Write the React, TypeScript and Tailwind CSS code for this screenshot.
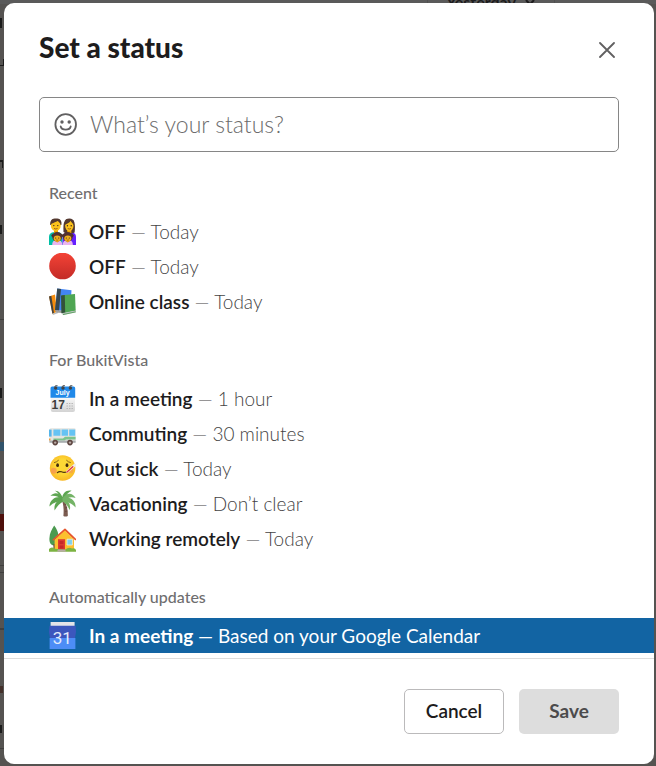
import { useState } from "react";
import type { ReactNode } from "react";

/* ---------- Emoji artwork ---------- */

function Emoji({ children }: { children: ReactNode }) {
  return (
    <svg viewBox="0 0 27 27" className="size-[27px] shrink-0" aria-hidden="true">
      {children}
    </svg>
  );
}

function Child({ x }: { x: number }) {
  return (
    <g transform={`translate(${x} 0)`}>
      <path d="M-5 27 C-5 23 -3 22 0 22 C3 22 5 23 5 27 Z" fill="#e9b5ee" />
      <circle cx="-4.2" cy="17.6" r="1.6" fill="#4b2f2b" />
      <circle cx="4.2" cy="17.6" r="1.6" fill="#4b2f2b" />
      <circle cx="0" cy="18.8" r="4.9" fill="#543330" />
      <ellipse cx="0" cy="20.4" rx="3.5" ry="3" fill="#efb01b" />
      <path d="M-1.5 22.4 L1.5 22.4 L0 24.8 Z" fill="#f2a600" />
      <circle cx="-1.5" cy="20" r="0.6" fill="#3a2320" />
      <circle cx="1.5" cy="20" r="0.6" fill="#3a2320" />
      <path d="M-1 21.8 Q0 22.6 1 21.8" stroke="#7a3b10" strokeWidth="0.6" fill="none" />
    </g>
  );
}

function FamilyEmoji() {
  return (
    <Emoji>
      <path d="M0 27 V19 C0 15 3 14 7 14 C11 14 13 15 13.5 19 V27 Z" fill="#00bfa5" />
      <path d="M13.5 27 V19 C14 15 17 14 20 14 C24 14 27 15 27 19 V27 Z" fill="#651fff" />
      <path d="M14.5 14 C14 5 15 0.5 20.3 0.5 C25.8 0.5 26.5 6 25.6 14.5 C23 16.5 17 16.5 14.5 14 Z" fill="#543930" />
      <path d="M1.2 7 C0.8 2.5 3 0.6 7 0.6 C11 0.6 13 2.5 12.4 7 Z" fill="#543930" />
      <path d="M5 11 h4 v4.5 h-4 z M18.3 11 h4 v4.5 h-4 z" fill="#f2a600" />
      <ellipse cx="6.8" cy="7.8" rx="4.9" ry="5.3" fill="#fcc21b" />
      <ellipse cx="20.3" cy="7.8" rx="4.2" ry="5.2" fill="#fcc21b" />
      <path d="M1.8 6 C4 5 8 3.6 9 2.8 C10 4.2 11 5 12 6 L11 1.8 L3 1.6 Z" fill="#543930" />
      <path d="M15.5 7 C18.5 6 21 4.5 21.6 2.8 C22.4 4.5 23.8 6 25 7 L24.8 2.5 L17 1.6 Z" fill="#543930" />
      <g fill="#38251f">
        <circle cx="4.8" cy="7.6" r="0.7" />
        <circle cx="8.8" cy="7.6" r="0.7" />
        <circle cx="18.4" cy="7.8" r="0.7" />
        <circle cx="22.2" cy="7.8" r="0.7" />
      </g>
      <path d="M5 10.4 Q6.8 11.6 8.6 10.4 M18.7 10.5 Q20.3 11.6 22 10.5" stroke="#8a4b16" strokeWidth="0.8" fill="none" />
      <Child x={8.2} />
      <Child x={18.8} />
    </Emoji>
  );
}

function RedCircleEmoji() {
  return (
    <Emoji>
      <defs>
        <linearGradient id="red" x1="0" y1="0" x2="0" y2="1">
          <stop offset="0" stopColor="#f44336" />
          <stop offset="1" stopColor="#c32b27" />
        </linearGradient>
      </defs>
      <circle cx="13.5" cy="13" r="13.3" fill="url(#red)" />
    </Emoji>
  );
}

function BooksEmoji() {
  return (
    <Emoji>
      <path d="M0 8.5 L6 6.5 L8 24 L3.4 25.8 Z" fill="#f48c0c" />
      <path d="M0 8.5 L2.3 7.8 L5 25.2 L3.4 25.8 Z" fill="#424242" />
      <path d="M3.4 25.8 L9 23.4 L9.4 25 L4 27 Z" fill="#bdbdbd" />
      <path d="M8.2 0.5 L22.5 2.2 L21 23 L6.2 22.5 Z" fill="#4285f4" />
      <path d="M8.2 0.5 L12 0.9 L10 23 L6 22 Z" fill="#37474f" />
      <path d="M6 22 L13 22.5 L13 25 L7 24.4 Z" fill="#9e9e9e" />
      <path d="M13 7.2 L26 6 L26.7 22.8 L14 25.5 Z" fill="#4fa653" />
      <path d="M12 7.5 L15.8 7 L16.200 24.8 L12.4 25.3 Z" fill="#33523a" />
      <path d="M12.6 25.2 L26.7 22.5 L26.7 24.2 L14 27 Z" fill="#b9c2bc" />
      <path d="M14 26.6 L26.8 23.9" stroke="#388e3c" strokeWidth="0.7" />
    </Emoji>
  );
}

function CalendarEmoji() {
  return (
    <Emoji>
      <defs>
        <linearGradient id="page" x1="0" y1="0" x2="0" y2="1">
          <stop offset="0" stopColor="#fafafa" />
          <stop offset="1" stopColor="#d3d3d3" />
        </linearGradient>
      </defs>
      <path d="M1.8 12 H26 V25 a2 2 0 0 1 -2 2 H3.8 a2 2 0 0 1 -2 -2 Z" fill="url(#page)" />
      <path d="M1.5 3.2 a1.6 1.6 0 0 1 1.6 -1.6 H24.6 a1.6 1.6 0 0 1 1.6 1.6 V12.8 H1.5 Z" fill="#2089e9" />
      <g fill="#424242">
        <circle cx="6.6" cy="3" r="1.7" />
        <circle cx="14" cy="3" r="1.7" />
        <circle cx="21.4" cy="3" r="1.7" />
      </g>
      <path d="M5.5 2.5 Q6 -0.4 8.6 0.7 M12.9 2.5 Q13.4 -0.4 16 0.7 M20.3 2.5 Q20.8 -0.4 23.4 0.7" stroke="#616161" strokeWidth="1" fill="none" />
      <text x="13.6" y="10" textAnchor="middle" className="fill-white font-['Liberation_Sans',sans-serif] text-[7px] font-bold">
        July
      </text>
      <text x="2.6" y="24" className="fill-[#3c3c3c] font-['Liberation_Sans',sans-serif] text-[12px] font-bold">
        17
      </text>
      <path d="M17.5 18.5 H24.6 M17.5 21 H24.6 M17.5 23.5 H24.6" stroke="#b5b5b5" strokeWidth="1.2" strokeDasharray="1.4 1.1" />
    </Emoji>
  );
}

function BusEmoji() {
  return (
    <Emoji>
      <path d="M0.6 9.3 Q0.8 8.2 2 8.2 H25.2 Q26.6 8.2 26.6 9.6 V22.3 H0.4 Z" fill="#e4e4e0" />
      <path d="M0 9.6 H2.6 V16.6 H0 Z" fill="#55b5ea" />
      <path d="M4.4 9.6 H11.4 V15.8 H4.4 Z M12.6 9.6 H19 V15.8 H12.6 Z M20.2 9.6 H26.2 V15.8 H20.2 Z" fill="#65c3f3" />
      <path d="M4.4 18.6 L14 18.6 L16 16.8 H26.6 V19.4 H17 L15.5 20.4 H4.4 Z" fill="#7cc48c" />
      <path d="M0.4 20.6 H26.6 V22.8 H0.4 Z" fill="#a9aeb0" />
      <path d="M0 18.4 H1.5 V20.6 H0 Z" fill="#ef9a3d" />
      <g>
        <circle cx="6.2" cy="22.6" r="2.8" fill="#5d4540" />
        <circle cx="21" cy="22.6" r="2.8" fill="#5d4540" />
        <circle cx="6.2" cy="22.6" r="1.2" fill="#b9aaa5" />
        <circle cx="21" cy="22.6" r="1.2" fill="#b9aaa5" />
      </g>
    </Emoji>
  );
}

function SickEmoji() {
  return (
    <Emoji>
      <defs>
        <radialGradient id="face" cx="0.5" cy="0.45" r="0.55">
          <stop offset="0.5" stopColor="#fdd835" />
          <stop offset="1" stopColor="#f9b825" />
        </radialGradient>
      </defs>
      <circle cx="13.6" cy="13" r="12.8" fill="url(#face)" />
      <circle cx="4.8" cy="15.8" r="3" fill="#f59353" opacity="0.75" />
      <circle cx="21.6" cy="15.4" r="2.8" fill="#f59353" opacity="0.6" />
      <ellipse cx="8.6" cy="10.2" rx="1.4" ry="1.9" fill="#422b0d" />
      <ellipse cx="18" cy="10.2" rx="1.4" ry="1.9" fill="#422b0d" />
      <path d="M5.4 7.6 Q7.6 7.200 9.4 5.4 M17.6 5.4 Q19.2 7.200 21.4 7.6" stroke="#6b4c14" strokeWidth="0.8" fill="none" strokeLinecap="round" />
      <path d="M8.400 17.6 Q10 16 12.6 16.8 Q15 18 18 16.8" stroke="#4a310f" strokeWidth="1.2" fill="none" strokeLinecap="round" />
      <path d="M18.4 16.6 L25.8 10" stroke="#eceff1" strokeWidth="2.6" strokeLinecap="round" />
      <path d="M18 17 L23.8 11.8" stroke="#e53935" strokeWidth="1.4" strokeLinecap="round" />
    </Emoji>
  );
}

function PalmEmoji() {
  return (
    <Emoji>
      <path d="M13.5 8 C17.5 13 19 19 18.8 26 Q16.6 27.2 14.4 26 C15 19 14.4 13 12.4 9 Z" fill="#7b5b50" />
      <path d="M15.7 14.5 L17.6 13.8 M16 18 L18.2 17.4 M16 21.5 L18.4 21" stroke="#5f443b" strokeWidth="0.7" />
      <g fill="#5da551">
        <path d="M14 8 C10.5 3 5.5 1.6 1.4 6 C6 5.2 9.8 6.6 13.4 10 Z" />
        <path d="M14 7.6 C7.5 5.8 1 9 0.4 16.4 C4.6 12.4 9.2 11 13.4 10.8 Z" />
        <path d="M13.6 8.6 C8 10.2 4.6 14 5.6 20.4 C8.2 15.8 11 13 14.2 11.4 Z" />
        <path d="M13.6 8.6 C12.8 4.2 9.6 0.6 6 0.8 C9 2.8 11 5.4 11.8 8.6 Z" />
        <path d="M13 9 C13.6 3 17 -0.2 22.6 0.8 C18.8 2.6 16.8 5 15.8 9.4 Z" />
      </g>
      <g fill="#74b366">
        <path d="M13.4 8.6 C17.4 1.8 23.8 2.4 26.6 8 C22 6.2 18.4 7.6 14.6 10.6 Z" />
        <path d="M13.6 8.4 C20 5.6 27 10 26.6 17.4 C22.8 13 18.6 11.8 14.2 11.2 Z" />
        <path d="M13.6 9 C19 10 22.2 13.8 20.8 20.2 C18.8 15.8 16.8 13 13.6 11.4 Z" />
      </g>
    </Emoji>
  );
}

function HouseEmoji() {
  return (
    <Emoji>
      <path d="M5.2 0.6 C7.6 3.6 9.8 8 9.8 13 C9.8 18 8.4 20.6 5.4 20.6 C2.2 20.6 0.2 18 0.4 13.6 C0.6 8 3 4 5.2 0.6 Z" fill="#4c9a50" />
      <path d="M4.4 19 H6.4 V26 H4.4 Z" fill="#6d4c41" />
      <path d="M5.6 14.4 L15.8 5.4 L25 14.4 V25 H5.6 Z" fill="#fcc02e" />
      <path d="M7 12.6 L15.8 4.8 L24.6 13.2" stroke="#f9a825" strokeWidth="1.4" fill="none" />
      <path d="M4.4 14.8 L16 4.4 L26.4 14.4" stroke="#e5532f" strokeWidth="1.5" fill="none" strokeLinecap="round" strokeLinejoin="round" />
      <path d="M9 14.2 H16 V25 H9 Z" fill="#dc3a2f" />
      <path d="M10.6 16 H14.4 V19 H10.6 Z M10.6 20.4 H14.4 V23.6 H10.6 Z" fill="#c62828" />
      <path d="M18 14.2 H23.4 V20 H18 Z" fill="#7fd0ee" stroke="#f5efe0" strokeWidth="0.8" />
      <path d="M0 24 Q2.6 21 5.8 23.8 L16 24.8 Q20 21.4 23 23.6 Q26 22.4 27 25 V26.8 H0 Z" fill="#7cb342" />
      <path d="M9 24.6 H16 L17 26.8 H8 Z" fill="#b9aca4" />
    </Emoji>
  );
}

function GoogleCalendarEmoji() {
  return (
    <Emoji>
      <path d="M1.6 0 H25.6 V6 H1.6 Z" fill="#e3e4e8" />
      <path d="M0.6 3.8 H26.6 L27 10 L26 16 H1 L0 10 Z" fill="#3c57bd" />
      <path d="M0.6 16 H26.4 V27 H0.6 Z" fill="#4d8df6" />
      <text x="13.2" y="22.4" textAnchor="middle" className="fill-[#e4ecfc] font-[Roboto,sans-serif] text-[17px]">
        31
      </text>
    </Emoji>
  );
}

/* ---------- Data ---------- */

type Status = { icon: ReactNode; name: string; detail: string; selected?: boolean };

const groups: { title: string; items: Status[] }[] = [
  {
    title: "Recent",
    items: [
      { icon: <FamilyEmoji />, name: "OFF", detail: "Today" },
      { icon: <RedCircleEmoji />, name: "OFF", detail: "Today" },
      { icon: <BooksEmoji />, name: "Online class", detail: "Today" },
    ],
  },
  {
    title: "For BukitVista",
    items: [
      { icon: <CalendarEmoji />, name: "In a meeting", detail: "1 hour" },
      { icon: <BusEmoji />, name: "Commuting", detail: "30 minutes" },
      { icon: <SickEmoji />, name: "Out sick", detail: "Today" },
      { icon: <PalmEmoji />, name: "Vacationing", detail: "Don’t clear" },
      { icon: <HouseEmoji />, name: "Working remotely", detail: "Today" },
    ],
  },
  {
    title: "Automatically updates",
    items: [
      {
        icon: <GoogleCalendarEmoji />,
        name: "In a meeting",
        detail: "Based on your Google Calendar",
        selected: true,
      },
    ],
  },
];

/* ---------- Dimmed workspace behind the dialog ---------- */

function Workspace() {
  return (
    <div aria-hidden="true" className="absolute inset-0 -z-10 overflow-hidden bg-[#555351]">
      <div className="flex h-1 justify-end bg-[#5a5a5a] pr-[101px]">
        <div className="flex h-7 w-32 -translate-y-3 items-center justify-center gap-2 border-x border-[#505050] text-[16px] leading-4 font-bold text-[#1d1c1d]">
          Yesterday
          <svg viewBox="0 0 12 12" className="size-3" fill="none" stroke="currentColor" strokeWidth="2">
            <path d="M2 4 L6 8.500 L10 4" />
          </svg>
        </div>
      </div>
      <svg viewBox="0 0 4 762" className="h-[762px] w-1">
        <path d="M0 14 h2 v10 h-2 z M0 61 h3 v-6 h1 v7 h-4 z M0 156 h3 v8 h-1 v-6 h-2 z M0 221 h2 v9 h-2 z M0 384 h2 v10 h-2 z M0 721 h2 v8 h-2 z" fill="#1b1b1b" />
        <path d="M0 315 h4 v1 h-4 z M0 561 h4 v1 h-4 z M0 568 h4 v1 h-4 z M0 624 h4 v2 h-4 z M0 744 h4 v1 h-4 z" fill="#403f3e" />
        <path d="M0 438 h4 v9 h-4 z" fill="#31536b" />
        <path d="M0 510 h4 v17 h-4 z" fill="#4e100b" />
        <path d="M0 682 h3 v7 h-3 z" fill="#43302a" />
      </svg>
    </div>
  );
}

/* ---------- Dialog ---------- */

export default function App() {
  const [status, setStatus] = useState("");

  return (
    <div className="relative isolate min-h-screen pt-[3px] pr-0.5 pb-0.5 pl-1 font-[Lato,'Noto_Sans',sans-serif] text-[#1d1c1d]">
      <Workspace />
      <section role="dialog" aria-labelledby="dialog-title" className="rounded-[10px] bg-white">
        <header className="flex h-[94px] items-start justify-between px-[35px] pt-[27px]">
          <h1 id="dialog-title" className="text-[28px] leading-[35px] font-black">
            Set a status
          </h1>
          <button type="button" aria-label="Close" className="mt-2 flex size-6 items-center justify-center text-[#616061]">
            <svg viewBox="0 0 16 16" className="size-4" fill="none" stroke="currentColor" strokeWidth="1.8" strokeLinecap="round">
              <path d="M1 1 L15 15 M15 1 L1 15" />
            </svg>
          </button>
        </header>

        <div className="mx-[35px] flex h-[55px] items-center rounded-[5px] border border-[#868686] pl-3.5">
          <button type="button" aria-label="Choose an emoji" className="size-6 shrink-0 text-[#616061]">
            <svg viewBox="0 0 24 24" className="size-6" fill="none" stroke="currentColor" strokeWidth="1.800">
              <circle cx="11.700" cy="11.500" r="10.300" />
              <circle cx="8" cy="9" r="1.700" fill="currentColor" stroke="none" />
              <circle cx="15.200" cy="9" r="1.700" fill="currentColor" stroke="none" />
              <path d="M6.700 13.500 C7.700 17.700 15.700 17.700 16.700 13.500" strokeLinecap="round" />
            </svg>
          </button>
          <input
            type="text"
            aria-label="What’s your status?"
            placeholder="What’s your status?"
            value={status}
            onChange={(event) => setStatus(event.target.value)}
            className="h-full min-w-0 flex-1 bg-transparent px-3 pb-0.5 text-[23px] font-light outline-none placeholder:text-[#6c6c6c]"
          />
        </div>

        <div className="pb-[5px]">
          {groups.map((group) => (
            <section key={group.title} className="pt-5">
              <h2 className="px-[45px] text-[16px] leading-[42px] font-medium text-[#6f6e6f]">{group.title}</h2>
              <ul>
                {group.items.map((item, index) => (
                  <li key={index}>
                    <button
                      type="button"
                      className={
                        item.selected
                          ? "flex h-[35px] w-full items-center gap-[13px] bg-[#1264a3] px-[45px] text-left text-[19px] text-white"
                          : "flex h-[35px] w-full items-center gap-[13px] px-[45px] text-left text-[19px] font-light text-[#454445]"
                      }
                    >
                      {item.icon}
                      <span className="pt-0.5">
                        <span className={item.selected ? "font-bold" : "font-semibold text-[#1d1c1d]"}>{item.name}</span>
                        {" — "}
                        {item.detail}
                      </span>
                    </button>
                  </li>
                ))}
              </ul>
            </section>
          ))}
        </div>

        <footer className="flex justify-end gap-[15px] border-t border-[#dddddd] px-[35px] py-[30px]">
          <button type="button" className="h-[45px] w-[100px] rounded-[5px] border border-[#bbbabb] text-[19px] font-semibold">
            Cancel
          </button>
          <button type="button" className="h-[45px] w-[100px] rounded-[5px] bg-[#dddddd] text-[19px] font-bold text-[#4c4b4c]">
            Save
          </button>
        </footer>
      </section>
    </div>
  );
}
